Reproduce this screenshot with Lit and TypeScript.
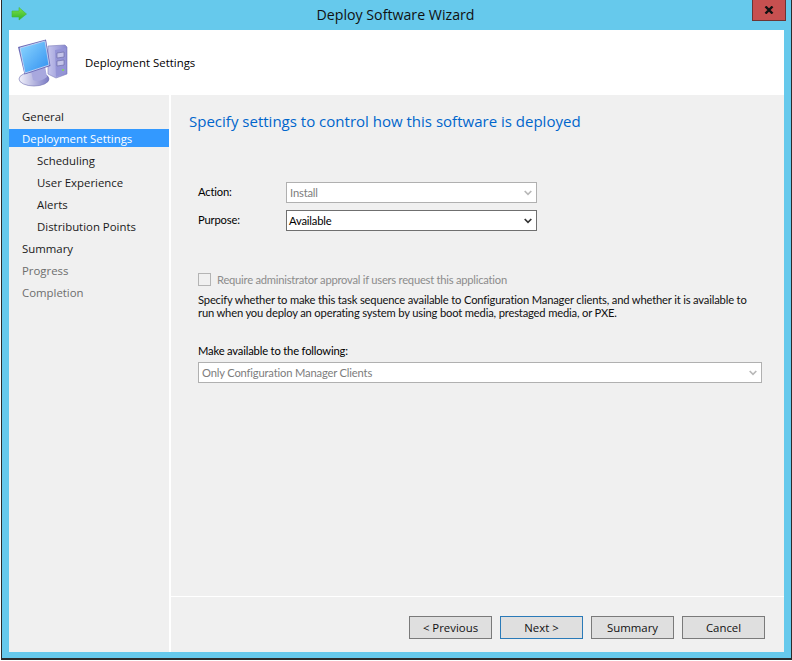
import { LitElement, html, css, svg } from "lit";
import { customElement } from "lit/decorators.js";

const chev = (c: string) => svg`<svg class="chev" width="8" height="6" viewBox="0 0 8 6"><path d="M.7 1 L4 4.3 L7.3 1" fill="none" stroke="${c}" stroke-width="1.7"/></svg>`;

const nav = [
  { t: "General", c: "" },
  { t: "Deployment Settings", c: "sel" },
  { t: "Scheduling", c: "sub" },
  { t: "User Experience", c: "sub" },
  { t: "Alerts", c: "sub" },
  { t: "Distribution Points", c: "sub" },
  { t: "Summary", c: "" },
  { t: "Progress", c: "dis" },
  { t: "Completion", c: "dis" },
];

@customElement("app-root")
export class AppRoot extends LitElement {
  static styles = css`
    :host { display: block; width: 792px; height: 661px; background: #fff; font-family: "Open Sans", "Noto Sans", sans-serif; font-size: 11.4px; color: #000; overflow: hidden; }
    * { box-sizing: border-box; }
    .win { margin-left: 1px; width: 791px; height: 660px; background: #66c9ec; border: 1px solid #2b2b2b; border-top: none; border-bottom-width: 2px; display: flex; flex-direction: column; }
    .tb { height: 30px; flex: none; display: grid; grid-template-columns: 1fr auto 1fr; padding-right: 2px; }
    .tb-l { display: flex; align-items: flex-start; padding: 7px 0 0 9px; }
    .tb-t { font-size: 14.2px; line-height: 30px; color: #111; }
    .tb-r { display: flex; justify-content: flex-end; align-items: flex-start; padding-right: 3px; }
    .close { width: 34px; height: 21px; background: #c75050; border: 1px solid #6e3434; border-top: none; display: flex; align-items: center; justify-content: center; }
    .client { flex: 1; min-height: 0; margin: 0 7px 6px 7px; background: #fff; display: flex; flex-direction: column; }
    .hdr { height: 65px; flex: none; display: flex; align-items: center; padding-left: 9px; gap: 17px; }
    .hdr span { line-height: 16px; }
    .main { flex: 1; min-height: 0; display: flex; gap: 2px; }
    .side { width: 160px; background: #f0f0f0; padding-top: 11px; flex: none; }
    .item { height: 22px; line-height: 22px; padding-left: 13px; white-space: nowrap; color: #1a1a1a; }
    .item.sub { padding-left: 28px; }
    .item.dis { color: #6d6d6d; }
    .item.sel { color: #fff; height: 18px; line-height: 20px; margin: 1px 0 3px; background: #3399ff; }
    .right { flex: 1; min-width: 0; display: flex; flex-direction: column; background: #f0f0f0; }
    .body { flex: 1; min-height: 0; padding: 16px 21px 0 18px; }
    h1 { margin: 0; font-weight: 400; font-size: 15.03px; line-height: 20px; color: #0066cc; white-space: nowrap; }
    .form { padding: 51px 0 0 9px; font-family: "Lato", "Open Sans", sans-serif; font-size: 11.2px; letter-spacing: -0.17px; }
    .row { display: flex; align-items: center; height: 21px; }
    .row + .row { margin-top: 7px; }
    .row label { width: 88px; flex: none; position: relative; top: -1px; }
    .sel-box { height: 21px; background: #fff; border: 1px solid #6f6f6f; display: flex; align-items: center; justify-content: space-between; padding: 0 4px 0 2px; line-height: 18px; }
    .sel-box.w { width: 251px; }
    .sel-box.dis { border-color: #b0b0b0; color: #7d7d7d; padding-left: 3px; }
    .check { display: flex; align-items: center; gap: 6px; margin-top: 41px; color: #8c8c8c; height: 14px; letter-spacing: -0.24px; }
    .cb { width: 13px; height: 13px; border: 1px solid #b4b4b4; background: #f0f0f0; flex: none; }
    .desc { margin: 7px 0 0; line-height: 13px; color: #111; width: 560px; }
    .ml { margin-top: 25px; line-height: 14px; }
    .sel-box.full { margin-top: 4px; width: 564px; }
    .foot { height: 56px; flex: none; border-top: 1px solid #fff; display: flex; justify-content: flex-end; gap: 8px; padding: 19px 19px 0 0; }
    .btn { width: 83px; height: 23px; border: 1px solid #7a7a7a; background: #dfdfdf; font: inherit; color: #111; padding: 0; line-height: 19px; }
    .btn.def { border-color: #2a7ab8; }
    .pc { filter: blur(.35px); }
  `;

  render() {
    return html`<div class="win">
      <div class="tb">
        <div class="tb-l">
          <svg width="16" height="14" viewBox="0 0 16 14"><defs><linearGradient id="ga" x1="0" y1="0" x2="0" y2="1"><stop offset="0" stop-color="#7fe04a"/><stop offset="1" stop-color="#2fb52a"/></linearGradient></defs><path d="M1 4 H8 V0.5 L15.5 7 L8 13 V10 H1 Z" fill="url(#ga)" stroke="#45b83a" stroke-width=".6"/></svg>
        </div>
        <div class="tb-t">Deploy Software Wizard</div>
        <div class="tb-r"><div class="close"><svg width="10" height="8" viewBox="0 0 10 8"><path d="M1.5 .5 L8.5 7.5 M8.5 .5 L1.5 7.5" stroke="#111" stroke-width="2.4" fill="none"/></svg></div></div>
      </div>
      <div class="client">
        <div class="hdr">
          <svg class="pc" width="50" height="50" viewBox="0 0 50 50">
            <defs>
              <linearGradient id="sc" x1="0" y1="0" x2="1" y2="1"><stop offset="0" stop-color="#8fd8ff"/><stop offset="1" stop-color="#2f8ff0"/></linearGradient>
              <linearGradient id="ca" x1="0" y1="0" x2="1" y2="0"><stop offset="0" stop-color="#c4c4ec"/><stop offset="1" stop-color="#8686cf"/></linearGradient>
              <linearGradient id="ba" x1="0" y1="0" x2="1" y2="0"><stop offset="0" stop-color="#f2f2fb"/><stop offset="1" stop-color="#7a7ac4"/></linearGradient>
            </defs>
            <path d="M30 8 L47 7 L49 9 L49 36 L38 40 L30 36 Z" fill="url(#ca)" stroke="#7c7cb8" stroke-width=".6"/>
            <path d="M37 12 L48 10 L48 35 L38 39 Z" fill="#9494d6"/>
            <path d="M39 15 L46 14 V19 L39 20 Z M39 23 L46 22 V27 L39 28 Z" fill="#c4c4ea" stroke="#6464a0" stroke-width=".6"/>
            <circle cx="45" cy="32" r="1" fill="#7fe04a"/>
            <ellipse cx="16" cy="41" rx="15" ry="7" fill="url(#ba)" stroke="#6e6eb0" stroke-width=".6"/>
            <path d="M13 33 L27 28 L29 39 Q21 45 15 42 Z" fill="#a8a8de"/>
            <path d="M0 9 L28 1.5 L32.5 28 L6.5 36.5 Z" fill="#6c6cb8"/>
            <path d="M2 10 L27 3 L31 27 L7 35 Z" fill="url(#sc)" stroke="#cfdcf6" stroke-width=".8"/>
          </svg>
          <span>Deployment Settings</span>
        </div>
        <div class="main">
          <div class="side">
            ${nav.map((n) => html`<div class="item ${n.c}">${n.t}</div>`)}
          </div>
          <div class="right">
            <div class="body">
              <h1>Specify settings to control how this software is deployed</h1>
              <div class="form">
                <div class="row"><label>Action:</label><div class="sel-box w dis"><span>Install</span>${chev("#b8b8b8")}</div></div>
                <div class="row"><label>Purpose:</label><div class="sel-box w"><span>Available</span>${chev("#333")}</div></div>
                <div class="check"><div class="cb"></div><span>Require administrator approval if users request this application</span></div>
                <p class="desc">Specify whether to make this task sequence available to Configuration Manager clients, and whether it is available to run when you deploy an operating system by using boot media, prestaged media, or PXE.</p>
                <div class="ml">Make available to the following:</div>
                <div class="sel-box full dis"><span>Only Configuration Manager Clients</span>${chev("#b8b8b8")}</div>
              </div>
            </div>
            <div class="foot">
              <button class="btn">&lt; Previous</button>
              <button class="btn def">Next &gt;</button>
              <button class="btn">Summary</button>
              <button class="btn">Cancel</button>
            </div>
          </div>
        </div>
      </div>
    </div>`;
  }
}
